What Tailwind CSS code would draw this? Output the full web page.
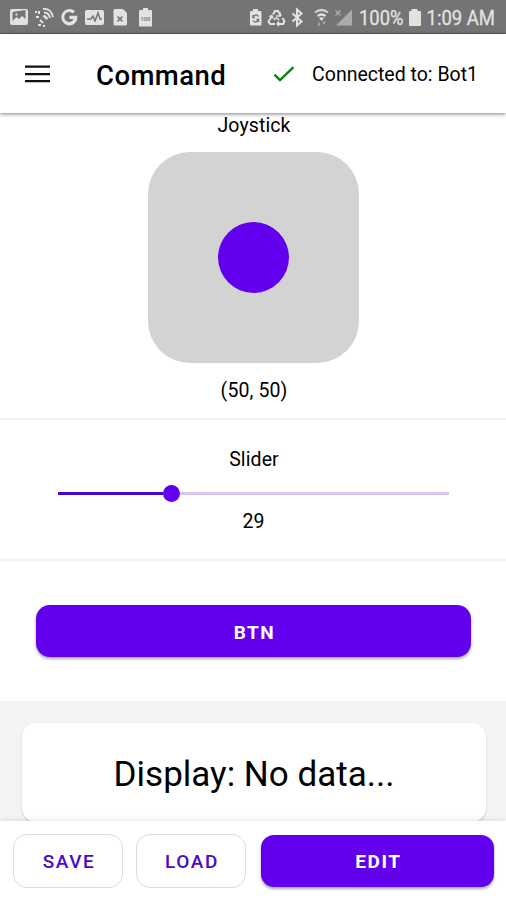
<!DOCTYPE html>
<html lang="en">
<head>
    <meta charset="UTF-8">
    <meta name="viewport" content="width=device-width, initial-scale=1.0">
    <title>Command</title>
    <script src="https://cdn.jsdelivr.net/npm/@tailwindcss/browser@4"></script>
</head>

<body class="h-screen overflow-hidden bg-white font-['Roboto',sans-serif] text-black flex flex-col">

<!-- Status bar -->
<div class="h-[34px] shrink-0 bg-[#747474] border-b border-[#5c5c5c] text-[#e2e2e2]">
    <svg class="block w-[506px] h-[33px]" viewBox="0 0 506 33" fill="currentColor">
        <!-- picture -->
        <path fill-rule="evenodd" d="M12 9h14a2 2 0 0 1 2 2v12a2 2 0 0 1-2 2H12a2 2 0 0 1-2-2V11a2 2 0 0 1 2-2zm.5 3v9l4-4 2.500 2 3-3 3.500 3v-9zm3 1.500h2v2h-2z"/>
        <!-- satellite -->
        <g fill="none" stroke="currentColor" stroke-width="1.800">
            <path d="M43 9q8-1 10 8M44 12.500q5 0 6 5.500"/>
            <path d="M43.500 15.500l4 3.500" stroke-width="2.600"/>
            <path d="M36 17h3M40 20l3 3M38 25h3M43 26h2M35 12h2M39 11v3" stroke-width="2"/>
        </g>
        <!-- google -->
        <path d="M69.500 15.700h7.700c.9 5.400-2.700 9.700-7.700 9.700a8.200 8.200 0 1 1 5.600-14.200l-2.500 2.400a4.900 4.900 0 1 0 1 5.300h-4.100z"/>
        <!-- activity -->
        <rect x="85" y="10" width="19" height="15" rx="2"/>
        <path d="M87 19h4l2-3 2 5 3-8 2 6h2" fill="none" stroke="#747474" stroke-width="1.500"/>
        <!-- file -->
        <path d="M115 9h8l4 4v11a1.500 1.500 0 0 1-1.500 1.500h-10.500a1.500 1.500 0 0 1-1.500-1.500V10.500A1.500 1.500 0 0 1 115 9z"/>
        <path d="M117.500 16.500l5 5M122.500 16.500l-5 5" stroke="#747474" stroke-width="1.600"/>
        <!-- charged battery -->
        <path d="M143 8h5v2h3a1 1 0 0 1 1 1v14.500a1 1 0 0 1-1 1h-11a1 1 0 0 1-1-1V11a1 1 0 0 1 1-1h3z"/>
        <text x="140.500" y="21" font-size="6" font-weight="700" fill="#858585" textLength="10">100</text>
        <!-- battery saver -->
        <path d="M253 9h5v2h2.500a1 1 0 0 1 1 1v12.500a1 1 0 0 1-1 1h-9.500a1 1 0 0 1-1-1V12a1 1 0 0 1 1-1h2z"/>
        <path d="M253 17.500a3 3 0 0 1 5.500-1M258.500 19.500a3 3 0 0 1-5.500 1M253 15v2.500h2M258.500 22v-2.500h-2" fill="none" stroke="#747474" stroke-width="1.400"/>
        <!-- data saver -->
        <g fill="none" stroke="currentColor" stroke-width="2">
            <path d="M273 14.500l2-3.500h3l3 5M282.500 18l2 3.500-1.500 2.500h-5M275 24h-5l-1.500-2.500 3.500-5.500"/>
            <path d="M280 12v4h-4M279 21.500l-2 2.500 2 2M269 16.500l3-1 1 3" stroke-width="1.300"/>
            <path d="M274 20q2-4 5 0" stroke-width="1.500"/>
        </g>
        <!-- bluetooth -->
        <path d="M292.500 13.500l9 8-4.500 4V9.500l4.500 4-9 8" fill="none" stroke="currentColor" stroke-width="2.100"/>
        <!-- wifi -->
        <g fill="none" stroke="currentColor" stroke-width="2.200">
            <path d="M315 12.500q6.500-5 13 0" opacity=".85"/>
            <path d="M317.500 16q4-3 8 0"/>
        </g>
        <path d="M319 18q2.500-1.500 5 0l-2.500 3z"/>
        <path d="M319 21.500l1.500 4h-3zM324 25.500l1.500-4h-3z" opacity=".5"/>
        <!-- signal -->
        <path d="M352 9.500v16h-16z" opacity=".5"/>
        <path d="M335.500 10.500l5 5M340.500 10.500l-5 5" stroke="currentColor" stroke-width="1.300" opacity=".55"/>
        <text x="359" y="25" font-size="20.500" textLength="44.500" lengthAdjust="spacingAndGlyphs" stroke="currentColor" stroke-width=".3">100%</text>
        <!-- battery -->
        <path d="M411.500 9h6v2h2.500a1 1 0 0 1 1 1v13a1 1 0 0 1-1 1h-10a1 1 0 0 1-1-1V12a1 1 0 0 1 1-1h1.500z"/>
        <text x="426.500" y="25" font-size="20.500" textLength="68.500" lengthAdjust="spacingAndGlyphs" stroke="currentColor" stroke-width=".3">1:09 AM</text>
    </svg>
</div>

<!-- Toolbar -->
<header class="relative z-10 h-[79px] shrink-0 bg-white flex items-center pl-[25px] pr-[29px] shadow-[0_1px_4px_rgba(0,0,0,0.5)]">
    <button aria-label="Menu">
        <svg class="w-[25px] h-[18px]" viewBox="0 0 25 18" stroke="#111" stroke-width="2.300">
            <path d="M0 1.700h25M0 9.200h25M0 16.200h25"/>
        </svg>
    </button>
    <h1 class="ml-[46px] w-[130px] text-[27.500px] leading-none font-medium tracking-[0.45px] whitespace-nowrap pt-1">Command</h1>
    <svg class="ml-[47px] w-[22px] h-4 shrink-0" viewBox="0 0 22 16" fill="none" stroke="#0a8212" stroke-width="2.400">
        <path d="M1.500 8.700l5.500 5.300L20.500 1.200"/>
    </svg>
    <span class="ml-auto -mr-px text-[19.500px] whitespace-nowrap pt-[3px]">Connected to: Bot1</span>
</header>

<main class="flex-1 min-h-0 overflow-hidden text-[19.500px] leading-6 tracking-[0.1px] text-center">
    <!-- Joystick -->
    <section class="h-[307px] border-b-2 border-[#f0f0f0] flex flex-col items-center">
        <div class="pt-px pl-0.5">Joystick</div>
        <div class="mt-3.5 size-[211px] rounded-[42px] bg-[#d3d3d3] flex items-center justify-center">
            <div class="size-[71px] rounded-full bg-[#6200ee]"></div>
        </div>
        <div class="mt-4 pl-0.5">(50, 50)</div>
    </section>

    <!-- Slider -->
    <section class="h-[141px] border-b-2 border-[#f0f0f0] pt-7">
        <div class="pl-0.5">Slider</div>
        <div class="mt-3 ml-[58px] w-[391px] h-[18px] flex items-center">
            <div class="h-[3px] w-[105px] bg-[#4308d0]"></div>
            <div class="size-[17px] rounded-full bg-[#6200ee]"></div>
            <div class="h-[3px] flex-1 bg-[#d6c5f2]"></div>
        </div>
        <div class="mt-2 pl-px">29</div>
    </section>

    <!-- Button -->
    <section class="h-[140px] pl-9 pr-[35px] pt-11">
        <button class="w-full h-[52px] rounded-[14px] bg-[#6200ee] text-white text-[19px] font-bold tracking-[1.500px] pt-1 pl-0.5 shadow-[0_2px_3px_rgba(0,0,0,0.35)]">BTN</button>
    </section>

    <!-- Display -->
    <section class="h-[140px] bg-[#f4f4f4] pl-[22px] pr-5 pt-[22px]">
        <div class="h-[99px] rounded-[14px] bg-white flex items-center justify-center pt-1 text-[35px] tracking-normal shadow-[0_1px_2px_rgba(0,0,0,0.2)]">Display: No data...</div>
    </section>
</main>

<!-- Actions -->
<footer class="relative h-[79px] shrink-0 bg-white flex items-start gap-[13px] pl-[13px] pr-3 pt-[13px] text-[19px] tracking-[1.600px] shadow-[0_-1px_5px_rgba(0,0,0,0.1)]">
    <button class="w-[110px] h-[54px] rounded-[14px] border border-[#dcdcdc] text-[#4a08cc] font-medium pt-0.5 pl-0.5">SAVE</button>
    <button class="w-[110px] h-[54px] rounded-[14px] border border-[#dcdcdc] text-[#4a08cc] font-medium pt-0.5 pl-0.5">LOAD</button>
    <button class="mt-px ml-0.5 flex-1 h-[52px] rounded-[13px] bg-[#6200ee] text-white font-bold pt-0.5 pl-0.5 shadow-[0_2px_3px_rgba(0,0,0,0.35)]">EDIT</button>
</footer>

</body>
</html>
